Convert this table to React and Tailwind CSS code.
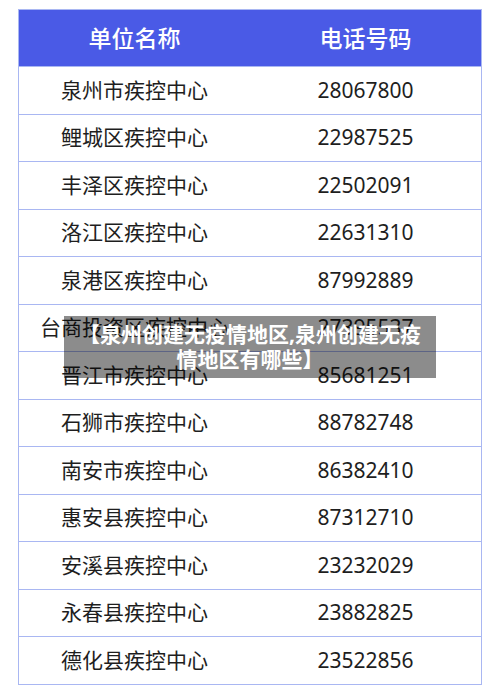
const rows = [
  ["泉州市疾控中心", "28067800"],
  ["鲤城区疾控中心", "22987525"],
  ["丰泽区疾控中心", "22502091"],
  ["洛江区疾控中心", "22631310"],
  ["泉港区疾控中心", "87992889"],
  ["台商投资区疾控中心", "27395537"],
  ["晋江市疾控中心", "85681251"],
  ["石狮市疾控中心", "88782748"],
  ["南安市疾控中心", "86382410"],
  ["惠安县疾控中心", "87312710"],
  ["安溪县疾控中心", "23232029"],
  ["永春县疾控中心", "23882825"],
  ["德化县疾控中心", "23522856"],
];

export default function App() {
  return (
    <div
      className="relative w-[500px] h-[695px] bg-white pt-[9px] px-[18px]"
      style={{ fontFamily: '"Noto Sans", "Noto Sans CJK SC", sans-serif' }}
    >
      <div className="border border-[#a9b7f2] w-[464px]">
        <div className="flex h-[56px] bg-[#4a5ae6] text-white text-[23px] font-medium items-center">
          <div className="w-1/2 text-center">单位名称</div>
          <div className="w-1/2 text-center">电话号码</div>
        </div>
        {rows.map(([n, p], i) => (
          <div
            key={i}
            className="flex h-[47.5px] items-center border-t border-[#a9b7f2] text-[21px] text-[#1e1e1e]"
          >
            <div className="w-1/2 text-center whitespace-nowrap">{n}</div>
            <div className="w-1/2 text-center">{p}</div>
          </div>
        ))}
      </div>
      <div className="absolute left-[64px] top-[316px] w-[372px] h-[62px] bg-black/45 flex flex-col items-center justify-center text-white font-bold text-[21px] leading-[25px] text-center">
        <div className="whitespace-nowrap">【泉州创建无疫情地区,泉州创建无疫</div>
        <div>情地区有哪些】</div>
      </div>
    </div>
  );
}
